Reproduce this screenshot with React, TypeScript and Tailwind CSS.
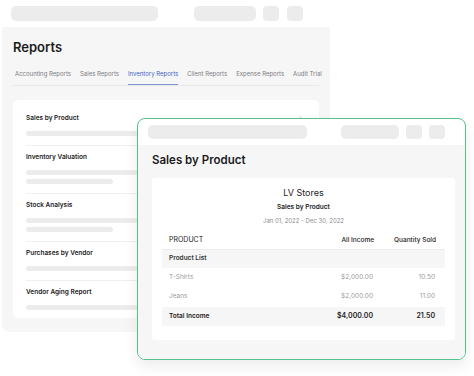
import { ChevronRight } from "lucide-react";

const FONT = "Inter, 'Noto Sans', sans-serif";

interface ReportItem {
  title: string;
  bars: number;
}

const ITEMS: ReportItem[] = [
  { title: "Sales by Product", bars: 1 },
  { title: "Inventory Valuation", bars: 2 },
  { title: "Stock Analysis", bars: 2 },
  { title: "Purchases by Vendor", bars: 1 },
  { title: "Vendor Aging Report", bars: 1 },
];

const TABS = [
  "Accounting Reports",
  "Sales Reports",
  "Inventory Reports",
  "Client Reports",
  "Expense Reports",
  "Audit Trial",
];

const ROWS = [
  { name: "T-Shirts", income: "$2,000.00", qty: "10.50", h: "h-[19px]" },
  { name: "Jeans", income: "$2,000.00", qty: "11.00", h: "h-[20px]" },
];

export default function App() {
  return (
    <div
      className="relative h-[376px] w-[474px] overflow-hidden bg-white"
      style={{ fontFamily: FONT }}
    >
      {/* Top skeleton bar */}
      <div className="flex h-[27px] items-start pl-[11px] pt-[6px]">
        <div className="h-[15px] w-[147px] rounded-[5px] bg-[#ececec]" />
        <div className="ml-[36px] h-[15px] w-[62px] rounded-[5px] bg-[#ececec]" />
        <div className="ml-[7px] h-[15px] w-[16px] rounded-[4px] bg-[#ececec]" />
        <div className="ml-[8px] h-[15px] w-[16px] rounded-[4px] bg-[#ececec]" />
      </div>

      {/* Reports panel */}
      <div className="ml-[2px] h-[305px] w-[328px] rounded-b-[8px] bg-[#f6f6f7] px-[11px]">
        <h1 className="pt-[12px] text-[13px] leading-[16px] font-semibold text-[#1c1c1c]">
          Reports
        </h1>
        <div className="mt-[15px] flex gap-[9px] border-b border-[#e9e9eb] pl-[2px]">
          {TABS.map((t) => {
            const active = t === "Inventory Reports";
            return (
              <div
                key={t}
                className={
                  active
                    ? "shrink-0 border-b border-[#7f93cf] pb-[6px] text-[6px] leading-[8px] whitespace-nowrap text-[#3f63c9]"
                    : "shrink-0 pb-[7px] text-[6px] leading-[8px] whitespace-nowrap text-[#7c7c80]"
                }
              >
                {t}
              </div>
            );
          })}
        </div>

        <div className="mt-[14px] h-[218px] rounded-[5px] bg-white px-[13px] pt-[7px]">
          {ITEMS.map((item, i) => (
            <div
              key={item.title}
              className={
                i === ITEMS.length - 1
                  ? "pt-[7px]"
                  : "border-b border-[#efeff1] pt-[7px] pb-[9px]"
              }
            >
              <div className="flex h-[10px] items-center justify-between">
                <span className="text-[6.5px] font-semibold text-[#222]">{item.title}</span>
                {i === 0 && <ChevronRight className="h-[10px] w-[10px] text-[#aaa]" strokeWidth={1.5} />}
              </div>
              <div className="mt-[7px] h-[5px] w-full rounded-full bg-[#ececec]" />
              {item.bars > 1 && (
                <div className="mt-[4px] h-[5px] w-[87px] rounded-full bg-[#ececec]" />
              )}
            </div>
          ))}
        </div>
      </div>

      {/* Sales by Product window */}
      <div className="absolute top-[118px] left-[137px] flex h-[242px] w-[329px] flex-col overflow-hidden rounded-[8px] border-[1.5px] border-[#55c08a] bg-white shadow-[0_6px_14px_rgba(0,0,0,0.08)]">
        <div className="flex h-[26px] shrink-0 items-center pl-[10px]">
          <div className="h-[14px] w-[159px] rounded-[5px] bg-[#ececec]" />
          <div className="ml-[34px] h-[14px] w-[58px] rounded-[5px] bg-[#ececec]" />
          <div className="ml-[7px] h-[14px] w-[16px] rounded-[4px] bg-[#ececec]" />
          <div className="ml-[7px] h-[14px] w-[16px] rounded-[4px] bg-[#ececec]" />
        </div>
        <div className="flex-1 bg-[#f6f6f7] pr-[10px] pl-[14px]">
          <div className="pt-[8px] text-[11.5px] leading-[14px] font-semibold text-[#1c1c1c]">
            Sales by Product
          </div>
          <div className="mt-[11px] h-[162px] rounded-[3px] bg-white px-[10px] pt-[8px]">
            <div className="text-center text-[9px] leading-[14px] text-[#1c1c1c]">LV Stores</div>
            <div className="mt-[2px] text-center text-[6.5px] leading-[10px] font-semibold text-[#222]">
              Sales by Product
            </div>
            <div className="mt-[4px] text-center text-[6px] leading-[10px] text-[#8d8d8d]">
              Jan 01, 2022 - Dec 30, 2022
            </div>

            <div className="mt-[6px] text-[6.5px]">
              <div className="grid h-[18px] grid-cols-[1fr_90px_62px] items-center border-b border-[#ececec] pr-[9px] pl-[7px] text-[#222]">
                <span className="text-[7px]">PRODUCT</span>
                <span className="text-right font-medium">All Income</span>
                <span className="text-right font-medium">Quantity Sold</span>
              </div>
              <div className="flex h-[18px] items-center bg-[#f6f6f6] pl-[7px] font-semibold text-[#333]">
                Product List
              </div>
              {ROWS.map((r) => (
                <div
                  key={r.name}
                  className={`grid ${r.h} grid-cols-[1fr_90px_62px] items-center pr-[10px] pl-[7px] text-[#9a9a9a]`}
                >
                  <span>{r.name}</span>
                  <span className="text-right">{r.income}</span>
                  <span className="text-right">{r.qty}</span>
                </div>
              ))}
              <div className="grid h-[19px] grid-cols-[1fr_90px_62px] items-center bg-[#f6f6f6] pr-[10px] pl-[7px] font-semibold text-[#222]">
                <span>Total Income</span>
                <span className="text-right text-[7px]">$4,000.00</span>
                <span className="text-right text-[7px]">21.50</span>
              </div>
            </div>
          </div>
        </div>
      </div>
    </div>
  );
}
